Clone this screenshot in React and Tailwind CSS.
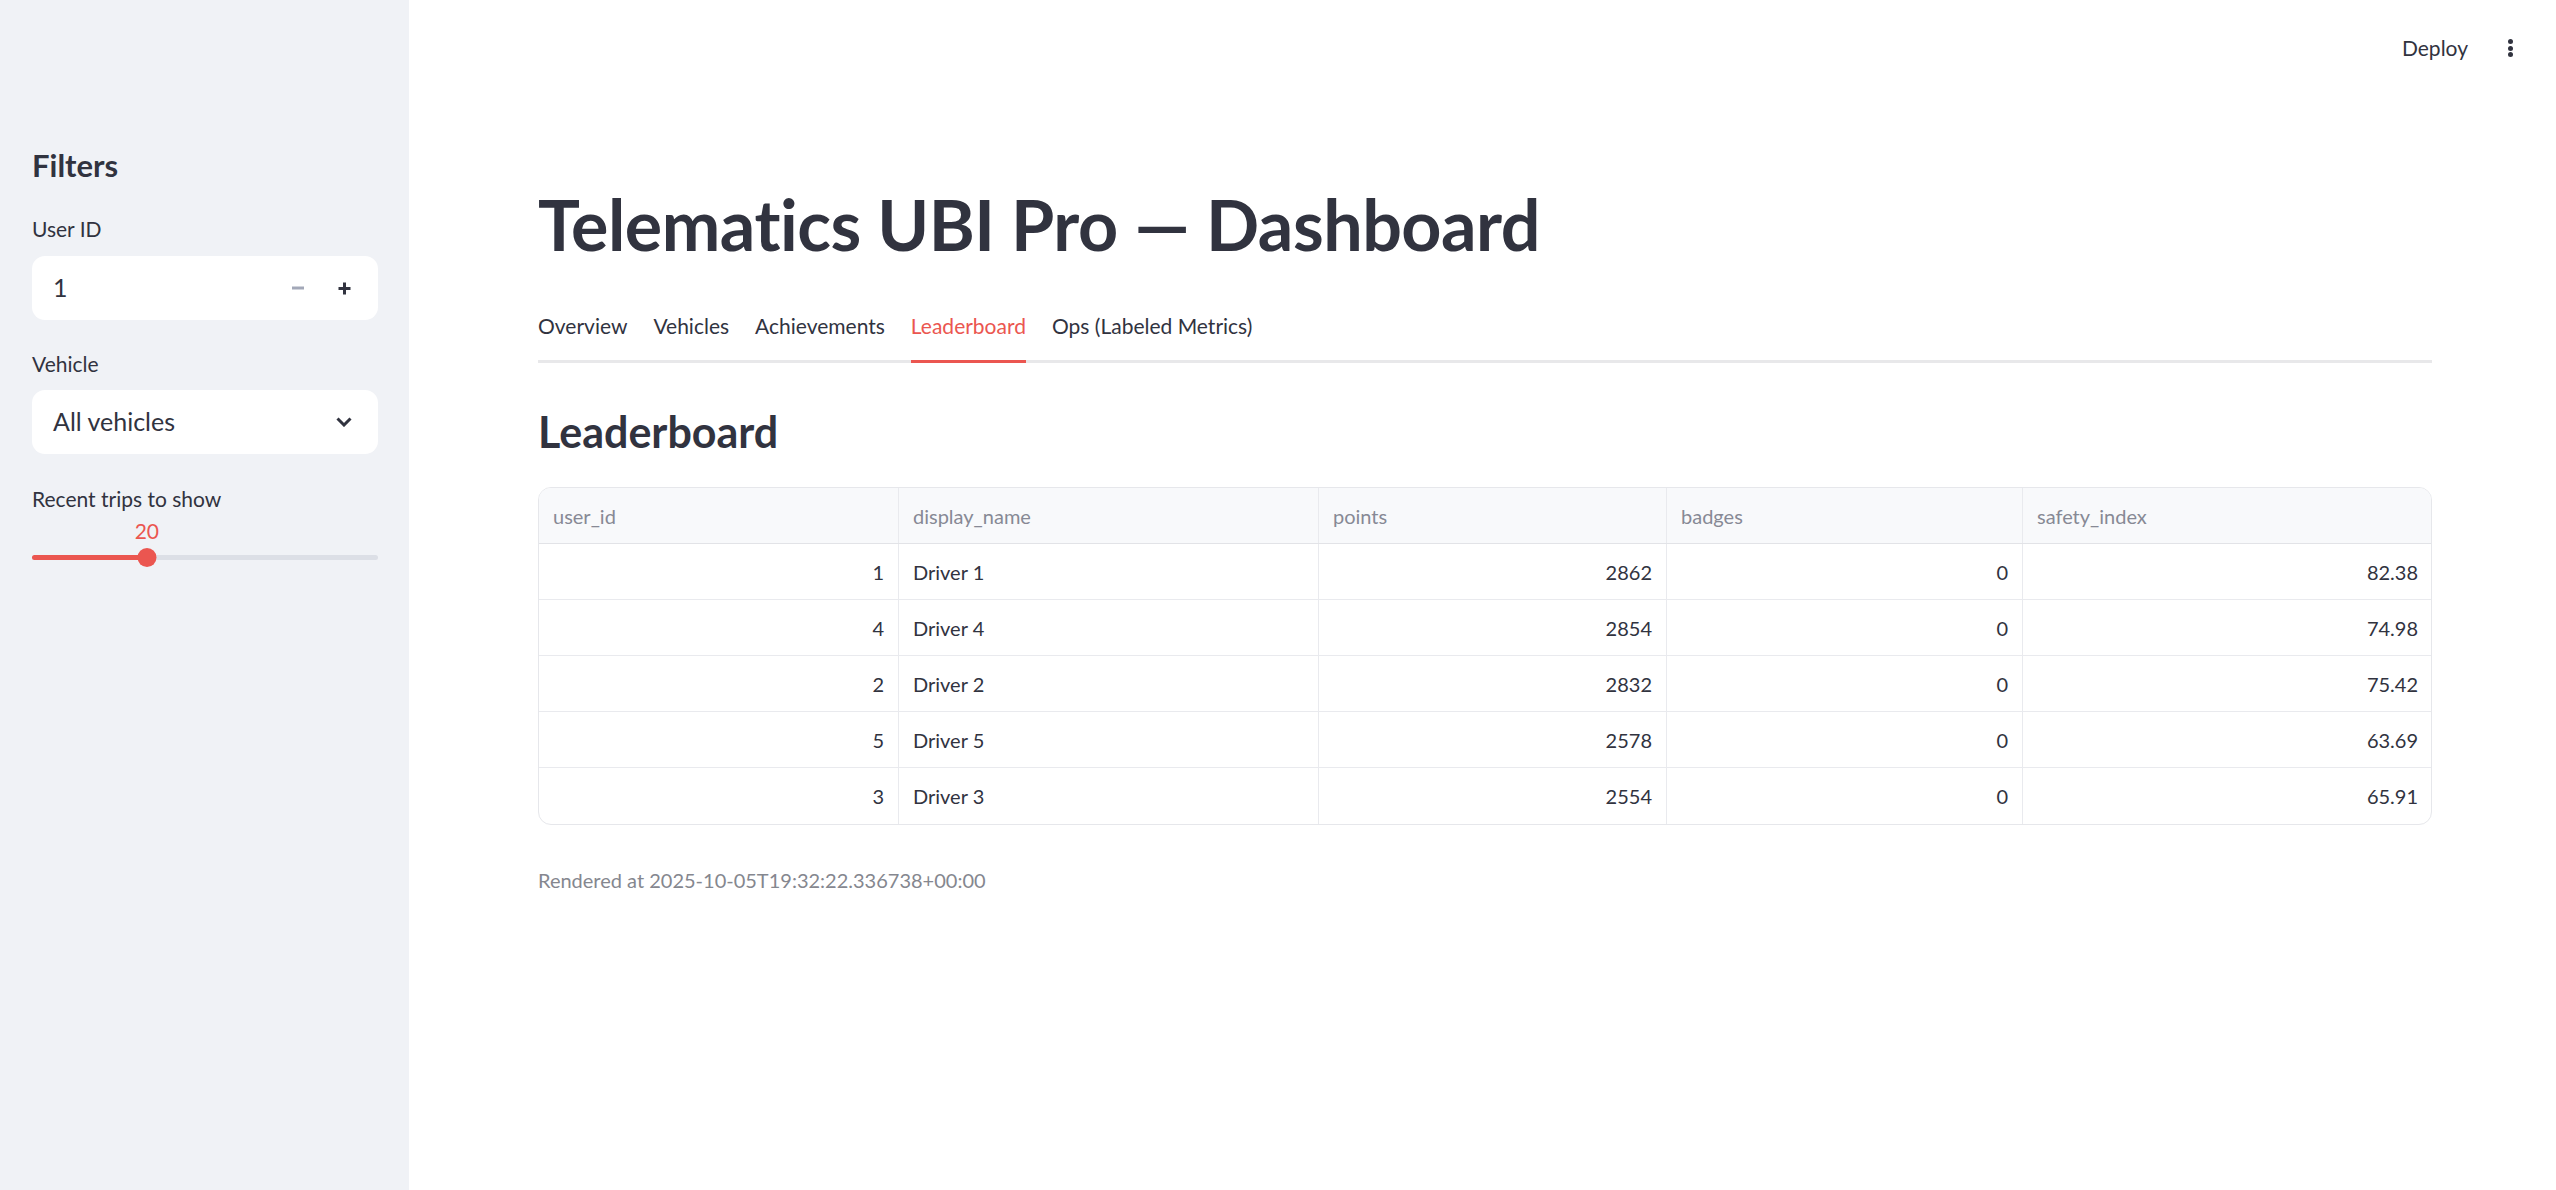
import { useState } from "react";

const rows = [
  { id: 1, name: "Driver 1", points: 2862, badges: 0, safety: "82.38" },
  { id: 4, name: "Driver 4", points: 2854, badges: 0, safety: "74.98" },
  { id: 2, name: "Driver 2", points: 2832, badges: 0, safety: "75.42" },
  { id: 5, name: "Driver 5", points: 2578, badges: 0, safety: "63.69" },
  { id: 3, name: "Driver 3", points: 2554, badges: 0, safety: "65.91" },
];

const tabs = ["Overview", "Vehicles", "Achievements", "Leaderboard", "Ops (Labeled Metrics)"];

function Sidebar() {
  const [userId, setUserId] = useState(1);
  const pct = 33.2;

  return (
    <aside className="w-[409px] shrink-0 bg-[#f0f2f6] pl-[32px] pr-[31px] pt-[145px]">
      <h2 className="text-[31px] leading-[40px] font-bold text-[#31333f]">Filters</h2>

      {/* User ID */}
      <label className="block mt-[30px] text-[21px] leading-[28px] text-[#31333f]">User ID</label>
      <div className="mt-[13px] h-[64px] rounded-[13px] bg-white flex items-center pl-[21px] pr-[20px]">
        <span className="flex-1 text-[25px] text-[#31333f]">{userId}</span>
        <button onClick={() => setUserId(Math.max(1, userId - 1))} className="w-[40px] h-[40px] flex items-center justify-center">
          <svg width="14" height="14" viewBox="0 0 14 14">
            <path d="M1 7h12" stroke="#a3a8b8" strokeWidth="3" />
          </svg>
        </button>
        <button onClick={() => setUserId(userId + 1)} className="ml-[12px] w-[28px] h-[40px] flex items-center justify-center">
          <svg width="13" height="13" viewBox="0 0 13 13">
            <path d="M0.5 6.5h12M6.5 0.5v12" stroke="#31333f" strokeWidth="3" />
          </svg>
        </button>
      </div>

      {/* Vehicle */}
      <label className="block mt-[30px] text-[21px] leading-[28px] text-[#31333f]">Vehicle</label>
      <div className="mt-[12px] h-[64px] rounded-[13px] bg-white flex items-center pl-[21px] pr-[26px]">
        <span className="flex-1 text-[25px] text-[#31333f]">All vehicles</span>
        <svg width="16" height="10" viewBox="0 0 16 10">
          <path d="M1.5 1.5l6.5 6.5 6.5-6.5" stroke="#31333f" strokeWidth="3" fill="none" />
        </svg>
      </div>

      {/* Slider */}
      <label className="block mt-[31px] text-[21px] leading-[28px] text-[#31333f]">Recent trips to show</label>
      <div className="relative mt-[4px] h-[28px]">
        <span
          className="absolute top-0 -translate-x-1/2 text-[21px] leading-[28px] text-[#eb5650]"
          style={{ left: `${pct}%` }}
        >
          20
        </span>
      </div>
      <div className="relative h-[24px] flex items-center">
        <div className="w-full h-[5px] rounded-full bg-[#dcdfe6]" />
        <div className="absolute left-0 h-[5px] rounded-full bg-[#eb5650]" style={{ width: `${pct}%` }} />
        <div
          className="absolute w-[19px] h-[19px] rounded-full bg-[#eb5650] -translate-x-1/2"
          style={{ left: `${pct}%` }}
        />
      </div>
    </aside>
  );
}

function Leaderboard() {
  const cols = "grid grid-cols-[360px_420px_348px_356px_1fr]";
  const cell = "border-r border-[#e9eaee] flex items-center px-[14px]";
  return (
    <div className="mt-[29px] border border-[#e6e7eb] rounded-[13px] overflow-hidden text-[20px]">
      <div className={`${cols} h-[56px] bg-[#f8f9fb] border-b border-[#e2e3e7] text-[#878995]`}>
        <div className={cell}>user_id</div>
        <div className={cell}>display_name</div>
        <div className={cell}>points</div>
        <div className={cell}>badges</div>
        <div className="flex items-center px-[14px]">safety_index</div>
      </div>
      {rows.map((r, i) => (
        <div
          key={r.id}
          className={`${cols} h-[56px] text-[#31333f] ${i < rows.length - 1 ? "border-b border-[#e9eaee]" : ""}`}
        >
          <div className={`${cell} justify-end`}>{r.id}</div>
          <div className={cell}>{r.name}</div>
          <div className={`${cell} justify-end`}>{r.points}</div>
          <div className={`${cell} justify-end`}>{r.badges}</div>
          <div className="flex items-center justify-end px-[13px]">{r.safety}</div>
        </div>
      ))}
    </div>
  );
}

export default function App() {
  const [active, setActive] = useState("Leaderboard");

  return (
    <div className="min-h-screen flex font-['Lato','Noto_Sans',sans-serif] text-[#31333f]">
      <Sidebar />

      <main className="relative flex-1 bg-white pl-[129px] pr-[124px] pt-[184px]">
        {/* Top bar */}
        <div className="absolute top-[30px] right-[43px] flex items-center">
          <span className="text-[21px] leading-[36px]">Deploy</span>
          <div className="ml-[40px] flex flex-col items-center gap-[1.5px]">
            <span className="w-[5px] h-[5px] rounded-full bg-[#31333f]" />
            <span className="w-[5px] h-[5px] rounded-full bg-[#31333f]" />
            <span className="w-[5px] h-[5px] rounded-full bg-[#31333f]" />
          </div>
        </div>

        <h1 className="text-[70px] leading-[80px] font-bold tracking-[-0.5px]">Telematics UBI Pro — Dashboard</h1>

        {/* Tabs */}
        <div className="mt-[46px] flex gap-[26px] border-b-[3px] border-[#e8e8ea]">
          {tabs.map((t) => (
            <button
              key={t}
              onClick={() => setActive(t)}
              className={`-mb-[3px] pb-[18px] text-[21px] leading-[32px] border-b-[3px] ${
                active === t ? "border-[#eb5650] text-[#eb5650]" : "border-transparent text-[#31333f]"
              }`}
            >
              {t}
            </button>
          ))}
        </div>

        <h3 className="mt-[43px] text-[43px] leading-[52px] font-bold">Leaderboard</h3>

        <Leaderboard />

        <p className="mt-[41px] text-[20px] leading-[28px] text-[#85878f]">
          Rendered at 2025-10-05T19:32:22.336738+00:00
        </p>
      </main>
    </div>
  );
}
